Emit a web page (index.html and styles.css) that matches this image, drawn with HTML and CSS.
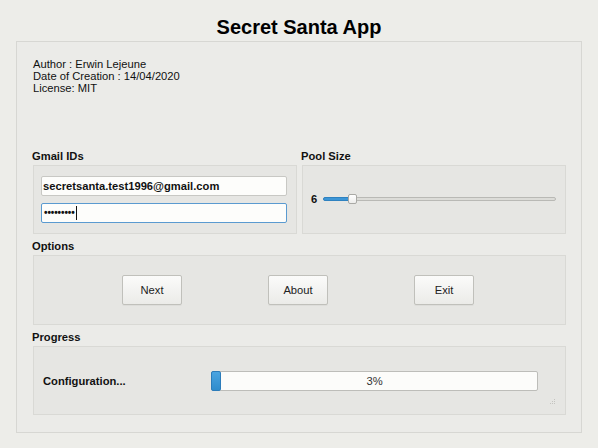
FILE: index.html
```html
<!DOCTYPE html>
<html>
<head>
<meta charset="utf-8">
<link rel="stylesheet" href="styles.css">
</head>
<body>
<h1 class="title">Secret Santa App</h1>
<main class="panel">
  <div class="about">
    <div>Author : Erwin Lejeune</div>
    <div>Date of Creation : 14/04/2020</div>
    <div>License: MIT</div>
  </div>
  <div class="row">
    <section class="group">
      <div class="label">Gmail IDs</div>
      <div class="box ids">
        <div class="field">secretsanta.test1996@gmail.com</div>
        <div class="field focus"><span class="dots">•••••••••</span><span class="caret"></span></div>
      </div>
    </section>
    <section class="group">
      <div class="label">Pool Size</div>
      <div class="box pool">
        <span class="value">6</span>
        <div class="slider">
          <div class="track"></div>
          <div class="fill"></div>
          <div class="handle"></div>
        </div>
      </div>
    </section>
  </div>
  <div class="label">Options</div>
  <div class="box options">
    <button class="btn">Next</button>
    <button class="btn">About</button>
    <button class="btn">Exit</button>
  </div>
  <div class="label">Progress</div>
  <div class="box progress">
    <span class="status">Configuration...</span>
    <div class="bar">
      <div class="chunk" style="width: 10px"></div>
      <span class="pct">3%</span>
    </div>
    <svg class="grip" width="6" height="6" viewBox="0 0 6 6">
      <rect x="4" y="0" width="1" height="1" fill="#c4c4c0"/>
      <rect x="2" y="2" width="1" height="1" fill="#c4c4c0"/>
      <rect x="4" y="2" width="1" height="1" fill="#c4c4c0"/>
      <rect x="0" y="4" width="1" height="1" fill="#c4c4c0"/>
      <rect x="2" y="4" width="1" height="1" fill="#c4c4c0"/>
      <rect x="4" y="4" width="1" height="1" fill="#c4c4c0"/>
    </svg>
  </div>
</main>
</body>
</html>
```

FILE: styles.css
```css
* { box-sizing: border-box; }
html, body {
  margin: 0;
  padding: 0;
  background: #edede9;
}
body {
  width: 598px;
  height: 448px;
  font-family: "Liberation Sans", Arial, sans-serif;
  font-size: 11.2px;
  color: #111;
  overflow: hidden;
}
.title {
  margin: 0;
  padding-top: 15px;
  height: 41px;
  font-size: 20px;
  line-height: 24px;
  font-weight: bold;
  text-align: center;
  color: #000;
}
.panel {
  display: block;
  margin: 0 16px;
  width: 566px;
  height: 392px;
  border: 1px solid #d7d7d3;
  background: #ebebe8;
  padding: 16px 15px 0 16px;
}
.about {
  height: 39px;
  margin-bottom: 50px;
  line-height: normal;
  color: #111;
}
.row {
  display: grid;
  grid-template-columns: 264px 264px;
  column-gap: 5px;
}
.label {
  height: 18px;
  line-height: 18px;
  font-weight: bold;
  margin-left: -1px;
  color: #111;
}
.row + .label, .options + .label { margin-top: 3px; }
.box {
  border: 1px solid #d9d9d5;
  background: #e6e6e3;
  position: relative;
}
.ids {
  height: 69px;
  padding: 10px 9px 10px 7px;
  display: flex;
  flex-direction: column;
  gap: 7px;
}
.field {
  height: 20px;
  border: 1px solid #c8c8c4;
  border-radius: 2px;
  background: #fdfdfb;
  font-weight: bold;
  line-height: 18px;
  padding-left: 1px;
  display: flex;
  align-items: center;
  color: #111;
}
.field.focus {
  border-color: #5a9ad0;
}
.dots {
  font-size: 10px;
  letter-spacing: -0.1px;
  line-height: 18px;
  padding-left: 1px;
}
.caret {
  display: inline-block;
  width: 1px;
  height: 14px;
  background: #111;
  margin-left: 1px;
}
.pool {
  height: 69px;
  display: flex;
  align-items: center;
  padding: 0 9px 1px 7px;
}
.value {
  font-weight: bold;
  width: 13px;
  padding-left: 1px;
}
.slider {
  position: relative;
  flex: 1;
  height: 10px;
}
.track {
  position: absolute;
  left: 0;
  right: 0;
  top: 3px;
  height: 4px;
  border: 1px solid #b9b9b5;
  border-radius: 2px;
  background: #dcdcd8;
}
.fill {
  position: absolute;
  left: 0;
  width: 27px;
  top: 3px;
  height: 4px;
  border-radius: 2px;
  background: #3d96d6;
  border: 1px solid #2f82c0;
}
.handle {
  position: absolute;
  left: 25px;
  top: 0;
  width: 9px;
  height: 10px;
  border: 1px solid #a9a9a5;
  border-radius: 2px;
  background: linear-gradient(#ffffff, #ededeb);
}
.options {
  height: 70px;
  display: flex;
  align-items: center;
  justify-content: center;
  gap: 86px;
  padding: 0 3px 1px 0;
}
.btn {
  width: 60px;
  height: 30px;
  border: 1px solid #c0c0bb;
  border-radius: 2px;
  background: linear-gradient(#fbfbfa, #ebebe8);
  font-family: "Liberation Sans", Arial, sans-serif;
  font-size: 11.2px;
  color: #222;
  padding: 0;
  box-shadow: 0 1px 0 rgba(0,0,0,0.04);
}
.progress {
  height: 69px;
  display: flex;
  align-items: center;
  padding-left: 9px;
}
.status {
  font-weight: bold;
  width: 168px;
}
.bar {
  position: relative;
  width: 327px;
  height: 20px;
  border: 1px solid #bdbdb9;
  border-radius: 2px;
  background: #fcfcfa;
  display: flex;
  align-items: center;
  justify-content: center;
}
.chunk {
  position: absolute;
  left: -1px;
  top: -1px;
  height: 20px;
  border: 1px solid #2c7cba;
  border-radius: 2px;
  background: linear-gradient(#4aa4e0, #2f8ccd);
}
.pct {
  color: #333;
  position: relative;
}
.grip {
  position: absolute;
  right: 9px;
  bottom: 9px;
}
```
